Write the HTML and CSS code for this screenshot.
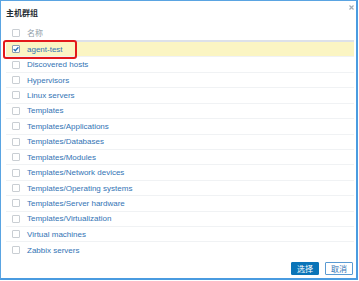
FILE: index.html
```html
<!DOCTYPE html>
<html lang="zh-CN">
  <head>
    <meta charset="UTF-8" />
    <title>主机群组</title>
    <link rel="stylesheet" href="styles.css">
  </head>
  <body>
    <div class="dialog">
      <!-- Judul dialog -->
      <div class="dialog-head">
        <h4>主机群组</h4>
        <span class="close">
          <svg width="5" height="5" viewBox="0 0 5 5">
            <path d="M0.5 0.5 L4.5 4.5 M4.5 0.5 L0.5 4.5" stroke="#a3adb6" stroke-width="1.2" />
          </svg>
        </span>
      </div>

      <div class="dialog-body">
        <div class="row head-row">
          <span class="checkbox"></span>
          <span class="name-head">名称</span>
        </div>
        <div class="row selected">
          <span class="checkbox checked">
            <svg width="8" height="8" viewBox="0 0 8 8">
              <path d="M1.6 4.1 L3.3 5.7 L6.4 2.3" fill="none" stroke="#1f6fb5" stroke-width="1.3" />
            </svg>
          </span>
          <a class="link">agent-test</a>
        </div>
        <div class="row"><span class="checkbox"></span><a class="link">Discovered hosts</a></div>
        <div class="row"><span class="checkbox"></span><a class="link">Hypervisors</a></div>
        <div class="row"><span class="checkbox"></span><a class="link">Linux servers</a></div>
        <div class="row"><span class="checkbox"></span><a class="link">Templates</a></div>
        <div class="row"><span class="checkbox"></span><a class="link">Templates/Applications</a></div>
        <div class="row"><span class="checkbox"></span><a class="link">Templates/Databases</a></div>
        <div class="row"><span class="checkbox"></span><a class="link">Templates/Modules</a></div>
        <div class="row"><span class="checkbox"></span><a class="link">Templates/Network devices</a></div>
        <div class="row"><span class="checkbox"></span><a class="link">Templates/Operating systems</a></div>
        <div class="row"><span class="checkbox"></span><a class="link">Templates/Server hardware</a></div>
        <div class="row"><span class="checkbox"></span><a class="link">Templates/Virtualization</a></div>
        <div class="row"><span class="checkbox"></span><a class="link">Virtual machines</a></div>
        <div class="row last"><span class="checkbox"></span><a class="link">Zabbix servers</a></div>
      </div>

      <div class="dialog-foot">
        <button type="button" class="btn btn-primary">选择</button>
        <button type="button" class="btn btn-alt">取消</button>
      </div>

      <!-- Kotak merah penanda -->
      <div class="mark"></div>
    </div>
  </body>
</html>
```

FILE: styles.css
```css
body {
  margin: 0;
  padding: 0;
  background-color: #fff;
  font-family: "Liberation Sans", Arial, "Noto Sans CJK SC", sans-serif;
}

.dialog {
  position: relative;
  box-sizing: border-box;
  width: 358px;
  height: 280px;
  background-color: #fff;
  border-top: 1px solid #5aa4e2;
  border-left: 1px solid #5aa4e2;
  border-right: 2px solid #4a9be0;
  border-bottom: 2px solid #4a9be0;
  display: flex;
  flex-direction: column;
}

.dialog-head {
  height: 24px;
  display: flex;
  align-items: center;
  justify-content: space-between;
  padding: 0 2px 0 5px;
}

.dialog-head h4 {
  margin: 0 0 1px;
  font-size: 8px;
  font-weight: bold;
  color: #1f2c33;
  font-family: "Liberation Sans", "Noto Sans CJK SC", sans-serif;
}

.close {
  display: flex;
  align-self: flex-start;
  margin-top: 4px;
}

.dialog-body {
  margin: 0 2px 0 5px;
}

.row {
  box-sizing: border-box;
  height: 15.43px;
  display: flex;
  align-items: center;
  padding-left: 6px;
  border-bottom: 1px solid #f0f2f4;
  font-size: 8px;
}

.head-row {
  height: 17px;
  border-bottom: 2px solid #dde1e9;
}

.row.last {
  border-bottom: none;
}

.selected {
  background-color: #fbf5c3;
}

.checkbox {
  box-sizing: border-box;
  width: 8px;
  height: 8px;
  border: 1px solid #c9ced3;
  border-radius: 1px;
  background-color: #fff;
  margin-right: 7px;
  display: flex;
  align-items: center;
  justify-content: center;
}

.checkbox.checked {
  border-color: #8a9fb2;
}

.checkbox svg {
  flex: none;
}

.name-head {
  color: #8f9ea8;
  font-family: "Noto Sans CJK SC", sans-serif;
}

.link {
  color: #3374b5;
}

.dialog-foot {
  margin-top: auto;
  display: flex;
  justify-content: flex-end;
  gap: 6px;
  padding: 0 3px 3px 0;
}

.btn {
  box-sizing: border-box;
  height: 13px;
  width: 28px;
  padding: 0;
  font-size: 8px;
  font-family: "Noto Sans CJK SC", sans-serif;
  border-radius: 1px;
  line-height: 1;
}

.btn-primary {
  background-color: #0a74b8;
  border: 1px solid #0a74b8;
  color: #fff;
}

.btn-alt {
  background-color: #fff;
  border: 1px solid #5a9ad2;
  color: #3374b5;
}

.mark {
  position: absolute;
  left: 2px;
  top: 39px;
  width: 74px;
  height: 19px;
  box-sizing: border-box;
  border: 2px solid #e3191b;
  border-radius: 3px;
}
```
